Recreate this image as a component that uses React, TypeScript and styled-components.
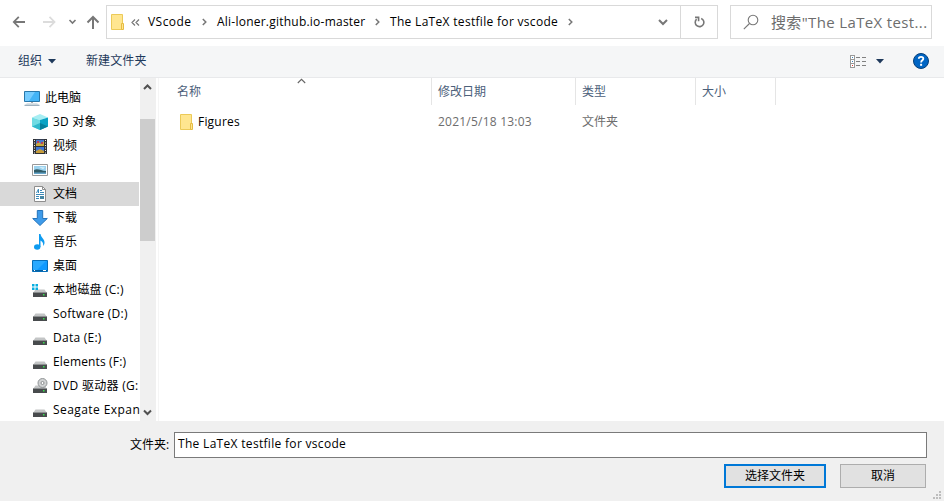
import React from "react";
import styled, { createGlobalStyle } from "styled-components";

const GlobalStyle = createGlobalStyle`
  * { box-sizing: border-box; }
  body { margin: 0; background: #fff; font: 12px/16px "Open Sans", "Noto Sans CJK SC", sans-serif; color: #000; }
  svg { display: block; flex: none; }
`;

const Dialog = styled.div`
  width: 944px;
  height: 501px;
  display: grid;
  grid-template-rows: 46px 32px 343px 80px;
  overflow: hidden;
  background: #fff;
`;

const Label = styled.span<{ $track?: number }>`
  white-space: pre;
  letter-spacing: ${(p) => p.$track ?? 0}px;
`;

/* Navigation bar */
const NavBar = styled.header`
  display: flex;
  padding: 5px 12px 0 12px;
`;
const NavButtons = styled.div`
  width: 94px;
  height: 34px;
`;
const AddressBar = styled.div`
  width: 612px;
  height: 34px;
  border: 1px solid #d9d9d9;
  display: flex;
  align-items: center;
  padding-left: 4px;
`;
const Chevrons = styled.div`
  width: 23px;
  padding-left: 6px;
`;
const CrumbGroup = styled.div`
  display: flex;
  gap: 10px;
`;
const Crumb = styled.div<{ $width: number }>`
  width: ${(p) => p.$width}px;
  display: flex;
  align-items: center;
  justify-content: space-between;
`;
const AddressTools = styled.div`
  margin-left: auto;
  height: 32px;
  display: flex;
`;
const AddressTool = styled.div<{ $divided?: boolean }>`
  width: ${(p) => (p.$divided ? 37 : 35)}px;
  display: flex;
  align-items: center;
  justify-content: center;
  border-left: ${(p) => (p.$divided ? "1px solid #d9d9d9" : "none")};
`;
const SearchBox = styled.div`
  width: 202px;
  height: 34px;
  margin-left: 12px;
  border: 1px solid #d9d9d9;
  display: flex;
  align-items: center;
  gap: 12px;
  padding-left: 12px;
  font-size: 15px;
  color: #6d6d6d;
`;

/* Command bar */
const Toolbar = styled.div`
  display: flex;
  align-items: center;
  padding: 0 15px 1px 18px;
  background: #f5f6f7;
  border-bottom: 1px solid #e8e9eb;
  color: #1e395b;
`;
const Command = styled.div<{ $width?: number }>`
  width: ${(p) => (p.$width ? `${p.$width}px` : "auto")};
  display: flex;
  align-items: center;
  gap: 6px;
`;
const ToolbarEnd = styled.div`
  margin-left: auto;
  display: flex;
  align-items: center;
  svg:nth-child(2) { margin: 0 29px 0 9px; }
`;

/* Browser area */
const Browser = styled.main`
  display: grid;
  grid-template-columns: 140px 16px 1fr;
  min-height: 0;
`;
const Tree = styled.nav`
  overflow: hidden;
  padding: 8px 1px 0 0;
`;
const TreeRow = styled.div<{ $selected?: boolean; $root?: boolean }>`
  height: 24px;
  display: flex;
  align-items: center;
  gap: 5px;
  padding-left: ${(p) => (p.$root ? 24 : 32)}px;
  background: ${(p) => (p.$selected ? "#d9d9d9" : "transparent")};
`;
const ScrollTrack = styled.div`
  background: #f0f0f0;
  display: flex;
  flex-direction: column;
  align-items: center;
  padding: 5px 1px 4px 0;
`;
const ScrollThumb = styled.div`
  width: 15px;
  height: 122px;
  margin: 28px 0 auto 0;
  background: #cdcdcd;
`;
const FileList = styled.section`
  margin-left: 2px;
  border-left: 1px solid #f5f5f5;
`;
const Columns = styled.div`
  display: grid;
  grid-template-columns: 273px 144px 120px 80px;
`;
const ColumnHead = styled.div<{ $first?: boolean }>`
  height: 27px;
  padding: 6px 0 0 ${(p) => (p.$first ? 18 : 6)}px;
  border-right: 1px solid #e5e5e5;
  color: #4c607a;
  display: flex;
`;
const SortMark = styled.div`
  padding-left: 96px;
  margin-top: -6px;
`;
const FileRow = styled(Columns)`
  height: 24px;
  margin-top: 5px;
  align-items: center;
`;
const Cell = styled.div<{ $name?: boolean }>`
  display: flex;
  align-items: center;
  gap: 4px;
  padding-left: ${(p) => (p.$name ? 21 : 6)}px;
  color: ${(p) => (p.$name ? "#000" : "#6d6d6d")};
`;

/* Footer */
const Footer = styled.footer`
  background: #f0f0f0;
  padding: 11px 3px 0 130px;
`;
const NameRow = styled.div`
  display: flex;
  align-items: center;
  gap: 5px;
  padding-right: 14px;
`;
const NameLabel = styled.label`
  width: 39px;
  white-space: nowrap;
`;
const NameField = styled.div`
  flex: 1;
  height: 26px;
  padding: 3px;
  border: 1px solid #7a7a7a;
  background: #fff;
`;
const Actions = styled.div`
  margin-top: 6px;
  display: flex;
  justify-content: flex-end;
`;
const Button = styled.button<{ $primary?: boolean }>`
  width: ${(p) => (p.$primary ? 102 : 86)}px;
  height: 24px;
  margin-right: ${(p) => (p.$primary ? 14 : 7)}px;
  padding: 0 0 1px;
  border: ${(p) => (p.$primary ? "2px solid #0078d7" : "1px solid #adadad")};
  background: #e1e1e1;
  color: #000;
  font: inherit;
`;
const GripSlot = styled.div`
  align-self: flex-end;
  margin-bottom: -11px;
`;

const NavIcons = () => (
  <svg width="94" height="34" fill="none" stroke="#777" strokeWidth="1.8">
    <path d="M2 17H13M6.8 11.8L1.8 17L6.8 22.2" />
    <path d="M31 17H42M37.5 11.8L42.5 17L37.5 22.2" stroke="#dcdcdc" />
    <path d="M57.5 15L60.5 18L63.5 15" strokeWidth="1.6" />
    <path d="M81 24V12M75.5 17.5L81 12L86.5 17.5" strokeWidth="2" />
  </svg>
);
const Folder = () => (
  <svg width="14" height="16">
    <path d="M.5.5H11.5V15.5H.5Z" fill="#ffe690" stroke="#ecca58" />
    <path d="M10.5 15.5V9.5H12.5V15.5Z" fill="#ffe690" stroke="#e6bc43" />
  </svg>
);
const Chevron = () => (
  <svg width="5" height="8" fill="none" stroke="#777" strokeWidth="1.5">
    <path d="M.8 1L3.8 4L.8 7" />
  </svg>
);
const DoubleChevron = () => (
  <svg width="9" height="7" fill="none" stroke="#777" strokeWidth="1.2">
    <path d="M4 .5L1 3.5L4 6.5M8 .5L5 3.5L8 6.5" />
  </svg>
);
const DropChevron = () => (
  <svg width="10" height="7" fill="none" stroke="#777" strokeWidth="2">
    <path d="M1 1L5 5L9 1" />
  </svg>
);
const Refresh = () => (
  <svg width="11" height="12" fill="none" stroke="#777" strokeWidth="1.6">
    <path d="M7.2 2.4A4.3 4.3 0 1 1 2.6 3.2" />
    <path d="M1 1.4H4.6V5.2" />
  </svg>
);
const SearchIcon = () => (
  <svg width="16" height="16" fill="none" stroke="#777" strokeWidth="1.1">
    <circle cx="10" cy="6" r="4.8" />
    <path d="M6.5 9.5L.8 15.2" />
  </svg>
);
const Caret = () => (
  <svg width="8" height="5" fill="#1e395b">
    <path d="M0 0H8L4 4.5Z" />
  </svg>
);
const ViewIcon = () => (
  <svg width="17" height="13" shapeRendering="crispEdges">
    <path d="M.5.5H4.5V12.5H.5ZM0 4.5H5M0 8.5H5" fill="#fff" stroke="#999" />
    <path d="M2 2h1v1H2zM2 6h1v1H2z" fill="#3a84bd" />
    <path d="M2 10h1v1H2z" fill="#e03a2e" />
    <path d="M6 2.5H10M12 2.5H16M6 6.5H10M12 6.5H16M6 10.5H10M12 10.5H16" stroke="#808080" />
  </svg>
);
const HelpIcon = () => (
  <svg width="16" height="16">
    <circle cx="8" cy="8" r="7.5" fill="#0065c4" stroke="#063f79" />
    <path d="M5.8 5.8C5.8 3.2 10.3 3.2 10.3 5.8C10.3 7.4 8.1 7.3 8.1 9.5" fill="none" stroke="#fff" strokeWidth="1.8" />
    <path d="M7.1 10.8h2v2h-2z" fill="#fff" />
  </svg>
);
const ScrollChevron = ({ down }: { down?: boolean }) => (
  <svg width="9" height="8" fill="none" stroke="#505050" strokeWidth="2">
    <path d={down ? "M1 1.5L4.5 5L8 1.5" : "M1 6L4.5 2.5L8 6"} />
  </svg>
);
const SortArrow = () => (
  <svg width="9" height="6" fill="none" stroke="#666" strokeWidth="1.1">
    <path d="M.8 5L4.5 1.3L8.2 5" />
  </svg>
);
const Grip = () => (
  <svg width="8" height="8" fill="#bdbdbd" shapeRendering="crispEdges">
    <path d="M6 0h2v2H6zM3 3h2v2H3zM6 3h2v2H6zM0 6h2v2H0zM3 6h2v2H3zM6 6h2v2H6z" />
  </svg>
);

type IconKind = "pc" | "cube" | "video" | "picture" | "doc" | "download" | "music" | "desktop" | "system" | "drive" | "dvd";

const driveBody = (
  <>
    <path d="M3.5 7.5H12.5L15 11H1Z" fill="#c3c5c6" />
    <path d="M1 10.5H15V15H1Z" fill="#484b4d" />
    <path d="M1 10.5H15" stroke="#8d9091" />
    <path d="M11 12h1.5v1.5H11z" fill="#35e04d" />
  </>
);

const drawings: Record<IconKind, React.ReactNode> = {
  pc: (
    <>
      <path d="M.5 1.5H15.5V11.5H.5Z" fill="#43b4f7" stroke="#2877aa" />
      <path d="M1 2H11L5 11H1Z" fill="#75ccff" />
      <path d="M7 12H9V13H7Z" fill="#aaa" />
      <path d="M3 13H13L15.5 15.5H.5Z" fill="#dbe3e8" />
      <path d="M.5 15.3H15.5" stroke="#8ba3b3" />
    </>
  ),
  cube: (
    <>
      <path d="M0 3.5L8 0L16 3.5L8 6Z" fill="#a7eef3" />
      <path d="M0 3.5L8 6V16L0 12.5Z" fill="#6fdbe3" />
      <path d="M16 3.5L8 6V16L16 12.5Z" fill="#08a2c4" />
      <path d="M0 12.5L8 9V16Z" fill="#30b9cc" />
      <path d="M16 12.5L8 9V16Z" fill="#047f9c" />
    </>
  ),
  video: (
    <>
      <path d="M1 1H15V16H1Z" fill="#303236" />
      <path d="M4 1.8H12V7.8H4Z" fill="#4778cf" />
      <path d="M4 9H12V15H4Z" fill="#3d75d4" />
      <path d="M4 6L7 4L9 6L12 3V8H4Z" fill="#c5a73f" />
      <path d="M5 3H7V5H5ZM9 4H11V6H9Z" fill="#b8425b" />
      <path d="M4 13L8 11L12 13V15H4Z" fill="#c59c3b" />
      <path d="M2.5 2V16M13.5 2V16" stroke="#eee" strokeDasharray="1 1.5" />
    </>
  ),
  picture: (
    <>
      <path d="M.5 2.5H15.5V13.5H.5Z" fill="#fff" stroke="#999" />
      <path d="M2 4H14V12H2Z" fill="#9bd2ee" />
      <path d="M2 8C6 6 9 9 14 9V12H2Z" fill="#315c68" />
      <path d="M2 10.5H14V12H2Z" fill="#66a6cb" />
      <path d="M7 5L13 5.5L11 7Z" fill="#dff3fa" />
    </>
  ),
  doc: (
    <>
      <path d="M2.5.5H10.5L13.5 3.5V15.5H2.5Z" fill="#fff" stroke="#8d8d8d" />
      <path d="M10.5.5V3.5H13.5" fill="none" stroke="#8d8d8d" />
      <path d="M4.5 7L6.5 3V7M8 4.5H10M8 6.5H12M4 8.5H12M4 10.5H7M4 12.5H7" fill="none" stroke="#3b89b8" />
      <path d="M8 10H12V13H8Z" fill="#4586a3" />
    </>
  ),
  download: <path d="M5.3.5H10.7V8.5H15.3L8 15.5L.7 8.5H5.3Z" fill="#3e9bea" stroke="#2574bb" />,
  music: (
    <>
      <ellipse cx="5.2" cy="13" rx="3.2" ry="2.8" fill="#0e9bf0" />
      <path d="M7 0H8.5C9 4 13 5 12.5 9C12.4 10 12 11 11 12C12 8 9 7 8.5 6.5V13H7Z" fill="#0e9bf0" />
    </>
  ),
  desktop: (
    <>
      <path d="M.5 2.5H15.5V13.5H.5Z" fill="#109aff" stroke="#066eb9" />
      <path d="M1 3H14L5 12H1Z" fill="#29a9ff" />
      <path d="M1 12.5H15" stroke="#075f9d" />
      <path d="M2 12.5H3M11 12.5H14" stroke="#fff" />
    </>
  ),
  system: (
    <>
      {driveBody}
      <path d="M0 2h2.5v2.5H0zM3.5 2H6v2.5H3.5zM0 5.5h2.5V8H0zM3.5 5.5H6V8H3.5z" fill="#09aee0" />
    </>
  ),
  drive: driveBody,
  dvd: (
    <>
      {driveBody}
      <circle cx="10.5" cy="5" r="4.5" fill="#d0d2d3" stroke="#909496" />
      <circle cx="10.5" cy="5" r="1.5" fill="#fff" stroke="#8b8e90" />
    </>
  ),
};

const TreeIcon = ({ kind }: { kind: IconKind }) => (
  <svg width="16" height="16">{drawings[kind]}</svg>
);

const places: { icon: IconKind; name: string; track?: number }[] = [
  { icon: "pc", name: "此电脑" },
  { icon: "cube", name: "3D 对象", track: 0.2 },
  { icon: "video", name: "视频" },
  { icon: "picture", name: "图片" },
  { icon: "doc", name: "文档" },
  { icon: "download", name: "下载" },
  { icon: "music", name: "音乐" },
  { icon: "desktop", name: "桌面" },
  { icon: "system", name: "本地磁盘 (C:)", track: 0.2 },
  { icon: "drive", name: "Software (D:)", track: 0.22 },
  { icon: "drive", name: "Data (E:)", track: 0.25 },
  { icon: "drive", name: "Elements (F:)", track: 0.15 },
  { icon: "dvd", name: "DVD 驱动器 (G:", track: 0.3 },
  { icon: "drive", name: "Seagate Expan", track: 0.43 },
];

const crumbs = [
  { name: "VScode", width: 59, track: 0.45 },
  { name: "Ali-loner.github.io-master", width: 163, track: 0.23 },
  { name: "The LaTeX testfile for vscode", width: 183, track: 0.31 },
];

export default function App() {
  return (
    <>
      <GlobalStyle />
      <Dialog>
        <NavBar>
          <NavButtons><NavIcons /></NavButtons>
          <AddressBar>
            <Folder />
            <Chevrons><DoubleChevron /></Chevrons>
            <CrumbGroup>
              {crumbs.map((c) => (
                <Crumb key={c.name} $width={c.width}>
                  <Label $track={c.track}>{c.name}</Label>
                  <Chevron />
                </Crumb>
              ))}
            </CrumbGroup>
            <AddressTools>
              <AddressTool><DropChevron /></AddressTool>
              <AddressTool $divided><Refresh /></AddressTool>
            </AddressTools>
          </AddressBar>
          <SearchBox>
            <SearchIcon />
            <Label $track={0.36}>搜索"The LaTeX test...</Label>
          </SearchBox>
        </NavBar>
        <Toolbar>
          <Command $width={68}><Label>组织</Label><Caret /></Command>
          <Command><Label $track={0.1}>新建文件夹</Label></Command>
          <ToolbarEnd><ViewIcon /><Caret /><HelpIcon /></ToolbarEnd>
        </Toolbar>
        <Browser>
          <Tree>
            {places.map((p, i) => (
              <TreeRow key={p.name} $root={i === 0} $selected={p.icon === "doc"}>
                <TreeIcon kind={p.icon} />
                <Label $track={p.track}>{p.name}</Label>
              </TreeRow>
            ))}
          </Tree>
          <ScrollTrack>
            <ScrollChevron />
            <ScrollThumb />
            <ScrollChevron down />
          </ScrollTrack>
          <FileList>
            <Columns>
              <ColumnHead $first><Label>名称</Label><SortMark><SortArrow /></SortMark></ColumnHead>
              <ColumnHead><Label>修改日期</Label></ColumnHead>
              <ColumnHead><Label>类型</Label></ColumnHead>
              <ColumnHead><Label>大小</Label></ColumnHead>
            </Columns>
            <FileRow>
              <Cell $name><Folder /><Label $track={0.2}>Figures</Label></Cell>
              <Cell><Label $track={0.22}>2021/5/18 13:03</Label></Cell>
              <Cell><Label>文件夹</Label></Cell>
            </FileRow>
          </FileList>
        </Browser>
        <Footer>
          <NameRow>
            <NameLabel>文件夹:</NameLabel>
            <NameField><Label $track={0.31}>The LaTeX testfile for vscode</Label></NameField>
          </NameRow>
          <Actions>
            <Button $primary>选择文件夹</Button>
            <Button>取消</Button>
            <GripSlot><Grip /></GripSlot>
          </Actions>
        </Footer>
      </Dialog>
    </>
  );
}
